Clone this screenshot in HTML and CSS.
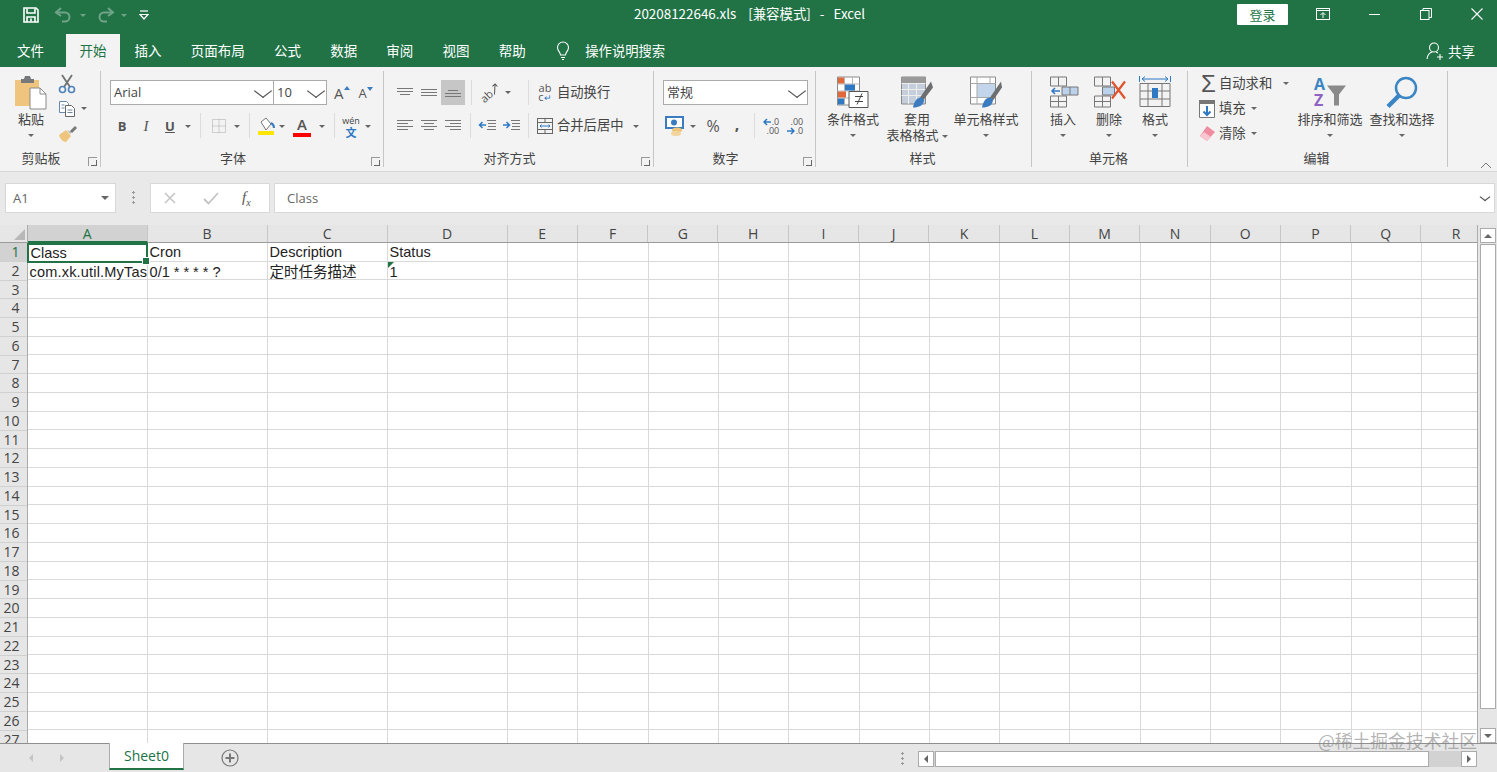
FILE: index.html
```html
<!DOCTYPE html>
<html lang="zh-CN">
<head>
    <meta charset="UTF-8">
    <title>20208122646.xls - Excel</title>
    <link rel="stylesheet" href="styles.css">
</head>
<body>

<!-- title bar -->
<header class="titlebar">
    <div class="qat">
        <svg class="qat-save" width="18" height="18" viewBox="0 0 18 18" fill="none" stroke="#fff" stroke-width="1.6"><path d="M2 2h12l2 2v12H2z"/><path d="M5 2.500v4.500h8V2.500M5 16v-5h8v5M9 12.500v3"/></svg>
        <svg class="qat-undo" width="20" height="16" viewBox="0 0 20 16" fill="none" stroke="#6fa488" stroke-width="2"><path d="M7 1 2 5.500 7 9"/><path d="M3 5.500h8a4.500 4.500 0 0 1 0 9H8"/></svg>
        <span class="caret caret-dim"></span>
        <svg class="qat-redo" width="20" height="16" viewBox="0 0 20 16" fill="none" stroke="#6fa488" stroke-width="2"><path d="M13 1l5 4.500L13 9"/><path d="M17 5.500H9a4.500 4.500 0 0 0 0 9h3"/></svg>
        <span class="caret caret-dim"></span>
        <svg class="qat-more" width="12" height="12" viewBox="0 0 12 12" fill="none" stroke="#fff" stroke-width="1.200"><path d="M2 2h8"/><path d="M2 5.500h8L6 10z" fill="none"/></svg>
    </div>
    <div class="doc-title">20208122646.xls&nbsp;&nbsp;&nbsp; [兼容模式]&nbsp;&nbsp; -&nbsp;&nbsp; Excel</div>
    <div class="window-btns">
        <button class="login">登录</button>
        <svg class="win-ico" width="16" height="14" viewBox="0 0 16 14" fill="none" stroke="#fff"><rect x="1.500" y="1.500" width="13" height="11"/><path d="M1.500 3.500h13M8 11V6M5.500 8 8 5.500 10.500 8"/></svg>
        <svg class="win-ico" width="14" height="14" viewBox="0 0 14 14" stroke="#fff"><path d="M1 7.500h11"/></svg>
        <svg class="win-ico" width="14" height="14" viewBox="0 0 14 14" fill="none" stroke="#fff"><rect x="1.500" y="3.500" width="8.500" height="9"/><path d="M4 3.500V1.500h8.500v9H10"/></svg>
        <svg class="win-ico" width="14" height="14" viewBox="0 0 14 14" fill="none" stroke="#fff" stroke-width="1.100"><path d="M1.500 1.500l11 11M12.500 1.500l-11 11"/></svg>
    </div>
</header>

<!-- ribbon tabs -->
<nav class="tabs">
    <span class="tab tab-file">文件</span>
    <span class="tab tab-active">开始</span>
    <span class="tab">插入</span>
    <span class="tab">页面布局</span>
    <span class="tab">公式</span>
    <span class="tab">数据</span>
    <span class="tab">审阅</span>
    <span class="tab">视图</span>
    <span class="tab">帮助</span>
    <svg class="bulb" width="16" height="20" viewBox="0 0 16 20" fill="none" stroke="#fff" stroke-width="1.100"><path d="M5.500 14c0-3-3-4-3-7.500a5.500 5.500 0 0 1 11 0c0 3.500-3 4.500-3 7.500z"/><path d="M6 16.500h4M7 18.500h2"/></svg>
    <span class="tell-me">操作说明搜索</span>
    <span class="share">
        <svg width="20" height="20" viewBox="0 0 20 20" fill="none" stroke="#fff" stroke-width="1.100"><circle cx="9" cy="6.500" r="4.500"/><path d="M2 18c.5-4 3-6.500 5.500-7.200M11 11l2 1M12 16h6M15 13v6"/></svg>
        共享
    </span>
</nav>

<!-- ribbon -->
<section class="ribbon">

    <div class="group group-clip">
        <div class="group-body">
            <div class="big big-paste">
                <svg width="34" height="35" viewBox="0 0 34 35"><path d="M1 5h24v26H1z" fill="#efc57d"/><path d="M7 4h3l1-3h5l1 3h3v4H7z" fill="#77787a"/><path d="M16 13h10l6 6v15H16z" fill="#fff" stroke="#8a8a8a"/><path d="M26 13v6h6" fill="none" stroke="#8a8a8a"/></svg>
                <span class="big-text">粘贴</span>
                <span class="caret"></span>
            </div>
            <div class="mini-col">
                <div class="mini"><svg width="18" height="20" viewBox="0 0 18 20" fill="none"><path d="M4 1l8 12M14 1 6 13" stroke="#6f7072" stroke-width="1.800"/><circle cx="4.500" cy="15.500" r="3" stroke="#4d82b8" stroke-width="1.600"/><circle cx="13.500" cy="15.500" r="3" stroke="#4d82b8" stroke-width="1.600"/></svg></div>
                <div class="mini"><svg width="18" height="18" viewBox="0 0 18 18" fill="#fff" stroke="#6a87a8"><path d="M1.500 1.500h7l2 2v9h-9z"/><path d="M7.500 5.500h6l3 3v8h-9z" stroke="#666"/><path d="M3.500 5h3M3.500 8h3M9.500 10h5M9.500 12.500h5" fill="none"/></svg><span class="caret caret-side"></span></div>
                <div class="mini"><svg width="20" height="18" viewBox="0 0 20 18"><path d="M1 10l7-5 5 6-5 6c-3 0-6-3-7-7z" fill="#efc57d"/><path d="M9 5l3 4 2-2z" fill="#bbb"/><path d="M13 7l5-5" stroke="#77787a" stroke-width="3"/></svg></div>
            </div>
        </div>
        <div class="group-label label-launch">剪贴板<span class="launcher"></span></div>
    </div>

    <div class="group group-font">
        <div class="group-body pad-rows">
            <div class="row-top">
                <div class="select select-font">Arial<span class="chev"></span></div>
                <div class="select select-size">10<span class="chev"></span></div>
                <span class="grow-a">A<svg width="6" height="4" viewBox="0 0 6 4"><path d="M0 4l3-4 3 4z" fill="#3b7cc0"/></svg></span>
                <span class="shrink-a">A<svg width="6" height="4" viewBox="0 0 6 4"><path d="M0 0l3 4 3-4z" fill="#3b7cc0"/></svg></span>
            </div>
            <div class="row-bottom">
                <span class="tb tb-b">B</span>
                <span class="tb tb-i">I</span>
                <span class="tb tb-u">U</span><span class="caret-box"><span class="caret"></span></span>
                <span class="sep"></span>
                <span class="tb"><svg width="16" height="16" viewBox="0 0 16 16" fill="none" stroke="#a9a9a9" stroke-dasharray="1 1"><path d="M1.500 1.500h13v13h-13zM8 1.500v13M1.500 8h13"/></svg></span><span class="caret-box"><span class="caret"></span></span>
                <span class="sep"></span>
                <span class="tb tb-fill"><svg width="20" height="18" viewBox="0 0 20 18"><path d="M5 5l5-4 5 6-5 6z" fill="#fff" stroke="#777"/><path d="M15 6c2 1 3 3 3 5" fill="none" stroke="#3b7cc0" stroke-width="2"/><path d="M2 14h16v4H2z" fill="#ffe600"/></svg></span><span class="caret-box"><span class="caret"></span></span>
                <span class="tb tb-color">A</span><span class="caret-box"><span class="caret"></span></span>
                <span class="sep"></span>
                <span class="tb tb-wen"><small>wén</small><b>文</b></span><span class="caret-box caret-wen"><span class="caret"></span></span>
            </div>
        </div>
        <div class="group-label label-launch">字体<span class="launcher"></span></div>
    </div>

    <div class="group group-align">
        <div class="group-body pad-rows">
            <div class="row-top">
                <span class="tb"><svg width="16" height="12" viewBox="0 0 16 12" stroke="#777"><path d="M0 1.500h16M0 4.500h16M3 7.500h10"/></svg></span>
                <span class="tb"><svg width="16" height="12" viewBox="0 0 16 12" stroke="#777"><path d="M0 2.500h16M0 5.500h16M0 8.500h16"/></svg></span>
                <span class="tb tb-on"><svg width="16" height="12" viewBox="0 0 16 12" stroke="#777"><path d="M3 3.500h10M0 6.500h16M0 9.500h16"/></svg></span>
                <span class="sep"></span>
                <span class="tb tb-orient">ab<svg width="10" height="12" viewBox="0 0 10 12" fill="none" stroke="#555"><path d="M1 10l7-7M5 2.500h3.500V6"/></svg></span><span class="caret-box"><span class="caret"></span></span>
                <span class="sep sep-far"></span>
                <span class="tb tb-wrap"><span>ab</span><span>c<i>↵</i></span></span>
                <span class="cmd-text">自动换行</span>
            </div>
            <div class="row-bottom">
                <span class="tb"><svg width="16" height="12" viewBox="0 0 16 12" stroke="#777"><path d="M0 .500h16M0 3.500h11M0 6.500h16M0 9.500h11"/></svg></span>
                <span class="tb"><svg width="16" height="12" viewBox="0 0 16 12" stroke="#777"><path d="M0 .500h16M3 3.500h10M0 6.500h16M3 9.500h10"/></svg></span>
                <span class="tb"><svg width="16" height="12" viewBox="0 0 16 12" stroke="#777"><path d="M0 .500h16M5 3.500h11M0 6.500h16M5 9.500h11"/></svg></span>
                <span class="sep sep-near"></span>
                <span class="tb"><svg width="18" height="12" viewBox="0 0 18 12" fill="none"><path d="M9 .500h9M10 3.500h8M10 6.500h8M9 9.500h9" stroke="#777"/><path d="M8 5H2M4.500 2 1.500 5l3 3" stroke="#2f79c2" stroke-width="1.500"/></svg></span>
                <span class="tb"><svg width="18" height="12" viewBox="0 0 18 12" fill="none"><path d="M9 .500h9M10 3.500h8M10 6.500h8M9 9.500h9" stroke="#777"/><path d="M1 5h6M4.500 2l3 3-3 3" stroke="#2f79c2" stroke-width="1.500"/></svg></span>
                <span class="sep sep-near"></span>
                <span class="tb"><svg width="18" height="18" viewBox="0 0 18 18" fill="none" stroke="#666"><rect x="1.500" y="1.500" width="15" height="15"/><path d="M1.500 5.500h15M1.500 12.500h15M9 1.500v4M9 12.500v4"/><path d="M4 9h10M5.500 7.500 4 9l1.500 1.500M12.500 7.500 14 9l-1.500 1.500" stroke="#2f79c2"/></svg></span>
                <span class="cmd-text">合并后居中</span><span class="caret-box caret-merge"><span class="caret"></span></span>
            </div>
        </div>
        <div class="group-label label-launch">对齐方式<span class="launcher"></span></div>
    </div>

    <div class="group group-number">
        <div class="group-body pad-rows">
            <div class="row-top">
                <div class="select select-format">常规<span class="chev"></span></div>
            </div>
            <div class="row-bottom">
                <span class="tb"><svg width="20" height="20" viewBox="0 0 20 20"><rect x="1" y="1" width="17" height="11" fill="#fff" stroke="#3b7cc0" stroke-width="2"/><circle cx="9" cy="6.500" r="3" fill="#3b7cc0"/><ellipse cx="12" cy="14" rx="5" ry="2.500" fill="#efc57d"/><ellipse cx="11" cy="17.500" rx="5" ry="2.500" fill="#f2d49c"/></svg></span><span class="caret-box"><span class="caret"></span></span>
                <span class="tb tb-pct">%</span>
                <span class="tb tb-comma">,</span>
                <span class="sep sep-near"></span>
                <span class="tb tb-dec"><svg width="8" height="8" viewBox="0 0 8 8" fill="none" stroke="#2f79c2" stroke-width="1.500"><path d="M8 4H1M4 1 1 4l3 3"/></svg><span class="dec-top">.0</span><span class="dec-bot">.00</span></span>
                <span class="tb tb-dec"><span class="dec-full">.00</span><svg width="8" height="8" viewBox="0 0 8 8" fill="none" stroke="#2f79c2" stroke-width="1.500"><path d="M0 4h7M4 1l3 3-3 3"/></svg><span class="dec-last">.0</span></span>
            </div>
        </div>
        <div class="group-label label-launch">数字<span class="launcher"></span></div>
    </div>

    <div class="group group-styles">
        <div class="group-body">
            <div class="big">
                <svg width="34" height="34" viewBox="0 0 34 34"><path d="M1.500 1.500h22v28h-22z" fill="#fff" stroke="#8a8a8a"/><path d="M1.500 8.500h22M1.500 15.500h22M1.500 22.500h22M8.500 1.500v28M16.500 1.500v28" stroke="#b5b5b5" fill="none"/><path d="M2 2h6v6H2zM2 16h8v6H2z" fill="#e0693c"/><path d="M9 9h10v6H9zM2 23h6v6H2z" fill="#2f79c2"/><path d="M13 16h19v16H13z" fill="#fff" stroke="#555"/><path d="M19 21h8M19 26h8M26 18l-5 11" stroke="#444" fill="none"/></svg>
                <span class="big-text">条件格式</span>
                <span class="caret"></span>
            </div>
            <div class="big">
                <svg width="34" height="34" viewBox="0 0 34 34"><path d="M1.500 1.500h24v27h-24z" fill="#c5cedb" stroke="#8a8a8a"/><path d="M1.500 8h24M1.500 14h24M1.500 20h24M8.500 1.500v27M16.500 1.500v27" stroke="#eee" fill="none"/><path d="M1.500 1.500h24v6h-24z" fill="#9a9a9a"/><path d="M31 6 20 22l3 3L33 12z" fill="#6d6e70"/><path d="M21 22c-4 0-7 4-8 10 6 0 11-2 11-8z" fill="#3b7cc0"/></svg>
                <span class="big-text">套用</span>
                <span class="big-text">表格格式<span class="caret caret-inline"></span></span>
            </div>
            <div class="big big-wide">
                <svg width="34" height="34" viewBox="0 0 34 34"><path d="M1.500 1.500h25v27h-25z" fill="#fff" stroke="#8a8a8a"/><path d="M8 8h18v14H8z" fill="#c3d5ea"/><path d="M1.500 8h25M1.500 22h25M8 1.500v27M21 1.500v6" stroke="#a9a9a9" fill="none"/><path d="M32 6 21 22l3 3L33 12z" fill="#6d6e70"/><path d="M21 22c-4 0-7 4-8 10 6 0 11-2 11-8z" fill="#3b7cc0"/></svg>
                <span class="big-text">单元格样式</span>
                <span class="caret"></span>
            </div>
        </div>
        <div class="group-label">样式</div>
    </div>

    <div class="group group-cells">
        <div class="group-body">
            <div class="big big-cell">
                <svg width="34" height="34" viewBox="0 0 34 34" fill="none" stroke="#777"><path d="M4.500 1.500h16v9h-16zM12.500 1.500v9M4.500 20.500h16v11h-16zM12.500 20.500v11M4.500 26h16"/><path d="M16 11.500h16v8H16zM24 11.500v8" fill="#bcd2ea"/><path d="M14 15.500H6M9 12.500l-3 3 3 3" stroke="#2f79c2" stroke-width="1.500"/></svg>
                <span class="big-text">插入</span>
                <span class="caret"></span>
            </div>
            <div class="big big-cell">
                <svg width="34" height="34" viewBox="0 0 34 34" fill="none" stroke="#777"><path d="M2.500 1.500h16v9h-16zM10.500 1.500v9M2.500 20.500h16v11h-16zM10.500 20.500v11M2.500 26h16"/><path d="M10.500 11.500h12v8h-12z" fill="#bcd2ea"/><path d="M20 6l13 17M33 6 20 23" stroke="#e0532c" stroke-width="2.200"/></svg>
                <span class="big-text">删除</span>
                <span class="caret"></span>
            </div>
            <div class="big big-cell">
                <svg width="34" height="35" viewBox="0 0 34 35" fill="none" stroke="#777"><path d="M1.500 1v6M32.500 1v6" stroke="#2f79c2"/><path d="M4 4h26M7 1.500 4 4l3 2.500M27 1.500 30 4l-3 2.500" stroke="#2f79c2"/><path d="M2 8.500h30v23H2zM10 8.500v23M24 8.500v23M2 16h30M2 24h30"/><path d="M14 13h6v10h-6z" fill="#2f79c2" stroke="none"/></svg>
                <span class="big-text">格式</span>
                <span class="caret"></span>
            </div>
        </div>
        <div class="group-label">单元格</div>
    </div>

    <div class="group group-edit">
        <div class="group-body">
            <div class="mini-col mini-edit">
                <div class="mini"><span class="sigma">Σ</span><span class="cmd-text">自动求和</span><span class="caret caret-far"></span></div>
                <div class="mini"><svg class="mini-ico" width="18" height="20" viewBox="0 0 18 20" fill="none"><path d="M1.500 1.500h15v17h-15z" fill="#fff" stroke="#777"/><path d="M1 1h16v4H1z" fill="#777"/><path d="M9 7v9M5.500 12.500 9 16l3.500-3.500" stroke="#2f79c2" stroke-width="2"/></svg><span class="cmd-text">填充</span><span class="caret caret-side"></span></div>
                <div class="mini"><svg class="mini-ico" width="18" height="18" viewBox="0 0 18 18"><path d="M9 1l8 6-8 9-7-5z" fill="#f08ba0"/><path d="M2 11l4-4 7 5-4 4z" fill="#f9c6d0"/></svg><span class="cmd-text">清除</span><span class="caret caret-side"></span></div>
            </div>
            <div class="big big-find">
                <svg width="36" height="34" viewBox="0 0 36 34"><text x="2" y="14" class="az az-a">A</text><text x="2" y="30" class="az az-z">Z</text><path d="M15 10h19l-7 9v11h-5V19z" fill="#8a8a8a"/></svg>
                <span class="big-text">排序和筛选</span>
                <span class="caret"></span>
            </div>
            <div class="big big-find">
                <svg width="36" height="34" viewBox="0 0 36 34" fill="none"><circle cx="22" cy="12.500" r="10" stroke="#3b85c4" stroke-width="2.500"/><path d="M15 20 4 31" stroke="#3b85c4" stroke-width="4.500"/></svg>
                <span class="big-text">查找和选择</span>
                <span class="caret"></span>
            </div>
        </div>
        <div class="group-label">编辑</div>
    </div>

    <svg class="collapse" width="12" height="7" viewBox="0 0 12 7" fill="none" stroke="#777"><path d="M1 6l5-5 5 5"/></svg>
</section>

<!-- formula bar -->
<section class="formula">
    <div class="name-box">A1<span class="caret caret-name"></span></div>
    <span class="grip"></span>
    <div class="fx-box">
        <svg width="14" height="14" viewBox="0 0 14 14" stroke="#c4c4c4" stroke-width="1.500"><path d="M2 2l10 10M12 2 2 12"/></svg>
        <svg class="fx-check" width="16" height="14" viewBox="0 0 16 14" fill="none" stroke="#c4c4c4" stroke-width="1.800"><path d="M1 8l4.500 4.500L15 2"/></svg>
        <span class="fx">f<sub>x</sub></span>
    </div>
    <div class="formula-input">Class<span class="chev chev-small"></span></div>
</section>

<!-- worksheet -->
<section class="sheet">
    <div class="sheet-main">
        <div class="col-heads">
            <div class="corner"><span class="corner-mark"></span></div>
            <div class="col col-wide col-on">A</div>
            <div class="col col-wide">B</div>
            <div class="col col-wide">C</div>
            <div class="col col-wide">D</div>
            <div class="col">E</div>
            <div class="col">F</div>
            <div class="col">G</div>
            <div class="col">H</div>
            <div class="col">I</div>
            <div class="col">J</div>
            <div class="col">K</div>
            <div class="col">L</div>
            <div class="col">M</div>
            <div class="col">N</div>
            <div class="col">O</div>
            <div class="col">P</div>
            <div class="col">Q</div>
            <div class="col">R</div>
        </div>
        <div class="sheet-body">
            <div class="row-heads">
                <div class="row-num row-on">1</div><div class="row-num">2</div><div class="row-num">3</div>
                <div class="row-num">4</div><div class="row-num">5</div><div class="row-num">6</div>
                <div class="row-num">7</div><div class="row-num">8</div><div class="row-num">9</div>
                <div class="row-num">10</div><div class="row-num">11</div><div class="row-num">12</div>
                <div class="row-num">13</div><div class="row-num">14</div><div class="row-num">15</div>
                <div class="row-num">16</div><div class="row-num">17</div><div class="row-num">18</div>
                <div class="row-num">19</div><div class="row-num">20</div><div class="row-num">21</div>
                <div class="row-num">22</div><div class="row-num">23</div><div class="row-num">24</div>
                <div class="row-num">25</div><div class="row-num">26</div><div class="row-num">27</div>
            </div>
            <div class="cells">
                <div class="data-row">
                    <div class="cell cell-selected">Class<span class="fill-handle"></span></div>
                    <div class="cell">Cron</div>
                    <div class="cell">Description</div>
                    <div class="cell">Status</div>
                </div>
                <div class="data-row">
                    <div class="cell cell-long">com.xk.util.MyTask</div>
                    <div class="cell">0/1 * * * * ?</div>
                    <div class="cell">定时任务描述</div>
                    <div class="cell cell-flag">1</div>
                </div>
            </div>
        </div>
    </div>
    <div class="vscroll">
        <span class="sb-btn"><span class="tri tri-up"></span></span>
        <span class="sb-thumb"></span>
        <span class="sb-rest"></span>
        <span class="sb-btn"><span class="tri tri-down"></span></span>
    </div>
</section>

<!-- sheet tabs and status -->
<footer class="bottom">
    <span class="nav-arrows"><span class="tri tri-left tri-dim"></span><span class="tri tri-right tri-dim"></span></span>
    <span class="sheet-tab">Sheet0</span>
    <svg class="add-sheet" width="18" height="18" viewBox="0 0 18 18" fill="none" stroke="#777"><circle cx="9" cy="9" r="8" stroke-width="1.200"/><path d="M9 4.500v9M4.500 9h9" stroke-width="2"/></svg>
    <span class="grip grip-bottom"></span>
    <div class="hscroll">
        <span class="sb-btn"><span class="tri tri-left"></span></span>
        <span class="sb-thumb-h"></span>
        <span class="sb-btn"><span class="tri tri-right"></span></span>
    </div>
</footer>

<div class="watermark">@稀土掘金技术社区</div>

</body>
</html>
```

FILE: styles.css
```css
* {
    box-sizing: border-box;
}
html, body {
    margin: 0;
    height: 772px;
    overflow: hidden;
}
body {
    position: relative;
    display: flex;
    flex-direction: column;
    font-family: "Noto Sans CJK SC", "Noto Sans", sans-serif;
    font-size: 13px;
    color: #444;
    background-color: #e6e6e6;
}

/* title bar */
.titlebar {
    height: 34px;
    flex: none;
    display: flex;
    align-items: center;
    background-color: #217346;
    color: #fff;
}
.qat {
    width: 634px;
    display: flex;
    align-items: center;
    padding-left: 22px;
    margin-top: -4px;
}
.qat-undo {
    margin-left: 14px;
}
.qat-redo {
    margin-left: 9px;
}
.qat-more {
    margin-left: 11px;
}
.doc-title {
    width: 603px;
    font-size: 13.400px;
    line-height: 26px;
    margin-top: -8px;
}
.window-btns {
    flex: 1;
    display: flex;
    align-items: center;
    margin-top: -6px;
}
.login {
    width: 51px;
    height: 21px;
    border: none;
    border-radius: 1px;
    padding: 0;
    background-color: #fff;
    color: #217346;
    font: 13px "Noto Sans CJK SC", sans-serif;
}
.win-ico {
    margin-left: 27px;
}
.window-btns .win-ico:nth-child(3),
.window-btns .win-ico:nth-child(4),
.window-btns .win-ico:nth-child(5) {
    margin-left: 37px;
}

/* tabs */
.tabs {
    height: 33px;
    flex: none;
    display: flex;
    align-items: center;
    background-color: #217346;
    color: #fff;
    font-size: 13.500px;
}
.tab {
    height: 33px;
    line-height: 32px;
    padding: 0 14.600px;
}
.tab-file {
    padding: 0 0 0 17px;
    margin-right: 22px;
}
.tab-active {
    padding: 0 13.500px;
    background-color: #f3f3f3;
    color: #217346;
}
.bulb {
    margin-left: 15px;
}
.tell-me {
    margin-left: 14px;
    font-size: 13.300px;
}
.share {
    margin-left: auto;
    margin-right: 22px;
    display: flex;
    align-items: center;
    gap: 3px;
}

/* ribbon */
.ribbon {
    height: 105px;
    flex: none;
    position: relative;
    display: flex;
    padding: 4px 0;
    background-color: #f3f3f3;
    border-bottom: 1px solid #d6d6d6;
}
.group {
    position: relative;
    display: flex;
    flex-direction: column;
    border-right: 1px solid #c6c6c6;
}
.group-clip { width: 101px; }
.group-font { width: 283px; }
.group-align { width: 270px; }
.group-number { width: 162px; }
.group-styles { width: 216px; }
.group-cells { width: 156px; }
.group-edit { width: 260px; }
.group-body {
    flex: 1;
    display: flex;
}
.pad-rows {
    flex-direction: column;
    padding: 9px 0 0 9px;
}
.group-styles .group-body { padding-left: 5px; }
.group-cells .group-body { padding-left: 8px; }
.group-edit .group-body { padding-left: 10px; }
.group-label {
    height: 17px;
    line-height: 17px;
    margin-bottom: 1px;
    text-align: center;
    font-size: 13px;
    padding-right: 2px;
}
.label-launch {
    padding-right: 18px;
}
.launcher {
    position: absolute;
    right: 3px;
    bottom: 1px;
    width: 9px;
    height: 9px;
    border: 1px solid #999;
    border-width: 1px 0 0 1px;
}
.launcher::after {
    content: "";
    position: absolute;
    right: 0;
    bottom: 0;
    width: 5px;
    height: 5px;
    border-right: 1px solid #666;
    border-bottom: 1px solid #666;
}

/* big buttons */
.big {
    width: 64px;
    margin-top: 4px;
    display: flex;
    flex-direction: column;
    align-items: center;
}
.big svg {
    height: 35px;
    flex: none;
    margin-bottom: 1px;
}
.big-text {
    height: 16px;
    line-height: 16px;
    font-size: 13px;
    white-space: nowrap;
}
.big .caret {
    margin-top: 7px;
}
.big-paste {
    width: 50px;
    margin-left: 6px;
    margin-right: 2px;
}
.big-wide { width: 74px; }
.big-cell { width: 46px; }
.big-find { width: 72px; }
.big .caret-inline {
    margin: 0 0 2px 3px;
}

/* small commands */
.mini-col {
    display: flex;
    flex-direction: column;
}
.mini {
    height: 25px;
    display: flex;
    align-items: center;
}
.mini-edit {
    width: 96px;
}
.mini-ico {
    margin-right: 3px;
}
.sigma {
    width: 21px;
    font: 24px "Liberation Sans", sans-serif;
    color: #555;
    text-align: center;
}
.cmd-text {
    font-size: 13.300px;
    white-space: nowrap;
    line-height: 16px;
    padding-bottom: 2px;
    align-self: center;
}

/* carets */
.caret {
    display: inline-block;
    width: 0;
    height: 0;
    border-left: 3px solid transparent;
    border-right: 3px solid transparent;
    border-top: 3px solid #666;
}
.caret-dim {
    margin-left: 6px;
    border-top-color: #6fa488;
}
.caret-side {
    margin-left: 5px;
}
.caret-far {
    margin-left: 11px;
}
.caret-box {
    width: 12px;
    display: flex;
    align-items: center;
    justify-content: center;
}
.caret-merge {
    margin-left: 7px;
}
.caret-wen {
    margin-left: -1px;
}

/* toolbar rows */
.row-top {
    height: 25px;
    display: flex;
    align-items: center;
}
.row-bottom {
    height: 26px;
    margin-top: 8px;
    display: flex;
    align-items: stretch;
}
.tb {
    width: 24px;
    display: flex;
    align-items: center;
    justify-content: center;
    flex: none;
}
.row-top .tb {
    height: 25px;
}
.tb-on {
    background-color: #c6c6c6;
}
.tb-fill {
    width: 20px;
}
.sep {
    width: 1px;
    height: 25px;
    margin: 0 6px;
    background-color: #dcdcdc;
}
.sep-near {
    margin: 0 4px 0 5px;
}
.sep-far {
    margin: 0 4px 0 14px;
}
.select {
    height: 25px;
    position: relative;
    display: flex;
    align-items: center;
    padding: 0 0 2px 3px;
    background-color: #fff;
    border: 1px solid #ababab;
    font-size: 13px;
}
.select-font {
    width: 164px;
    font-family: "Open Sans", sans-serif;
}
.select-size {
    width: 54px;
    margin-left: -1px;
    font-family: "Open Sans", sans-serif;
}
.select-format {
    width: 145px;
}
.chev {
    position: absolute;
    right: 5px;
    top: 5px;
    width: 10px;
    height: 10px;
    border-right: 1px solid #555;
    border-bottom: 1px solid #555;
    transform: scaleX(1.300) rotate(45deg);
}
.grow-a, .shrink-a {
    display: flex;
    font-family: "Open Sans", sans-serif;
    color: #555;
}
.grow-a {
    margin-left: 7px;
    font-size: 15px;
}
.shrink-a {
    margin-left: 9px;
    font-size: 13px;
}
.grow-a svg, .shrink-a svg {
    margin-top: 3px;
}
.tb-b, .tb-i, .tb-u {
    font: bold 13px "Open Sans", sans-serif;
    color: #555;
}
.tb-i {
    font-style: italic;
    font-weight: 400;
    font-family: "Liberation Serif", serif;
    font-size: 15px;
}
.tb-u {
    text-decoration: underline;
}
.tb-color {
    font: 600 15px "Open Sans", sans-serif;
    color: #555;
    border-bottom: 4px solid #f00;
    margin: 0 5px 2px;
    width: 18px;
    line-height: 1;
    padding-top: 2px;
}
.tb-wen {
    flex-direction: column;
    line-height: 1;
    margin-left: -2px;
}
.tb-wen small {
    font: 9px "Open Sans", sans-serif;
}
.tb-wen b {
    font-size: 11px;
    line-height: 11px;
    color: #2f79c2;
}
.tb-orient {
    font: 11px "Open Sans", sans-serif;
    color: #555;
    transform: rotate(-42deg);
}
.tb-wrap {
    flex-direction: column;
    font: 11px "Open Sans", sans-serif;
    line-height: 9px;
    color: #555;
}
.tb-wrap i {
    font-style: normal;
    color: #2f79c2;
    font-size: 9px;
}
.tb-pct {
    margin-left: 2px;
    font: 16px "Open Sans", sans-serif;
    color: #555;
}
.tb-comma {
    font: bold 16px "Open Sans", sans-serif;
    color: #555;
    padding-bottom: 5px;
}
.tb-dec {
    display: grid;
    grid-template-columns: 9px 1fr;
    grid-template-rows: 9px 9px;
    align-content: center;
    padding: 0 5px;
    font: 9px "Open Sans", sans-serif;
    line-height: 9px;
    color: #555;
}
.tb-dec svg {
    align-self: center;
}
.dec-top, .dec-last {
    justify-self: end;
}
.dec-bot, .dec-full {
    grid-column: 1 / 3;
    justify-self: end;
}
.az {
    font: bold 16px "Open Sans", sans-serif;
}
.az-a { fill: #3b85c4; }
.az-z { fill: #8f62c4; }
.collapse {
    position: absolute;
    right: 5px;
    bottom: 2px;
}

/* formula bar */
.formula {
    height: 53px;
    flex: none;
    display: flex;
    padding: 11px 2px 11px 5px;
    background-color: #e9e9e9;
}
.name-box, .fx-box, .formula-input {
    height: 30px;
    background-color: #fff;
    border: 1px solid #d8d8d8;
    display: flex;
    align-items: center;
    font-family: "Open Sans", sans-serif;
    color: #666;
}
.name-box {
    width: 111px;
    padding-left: 7px;
    position: relative;
}
.caret-name {
    position: absolute;
    right: 6px;
    top: 12px;
    border-left-width: 4px;
    border-right-width: 4px;
    border-top-width: 4px;
}
.grip {
    width: 34px;
    flex: none;
    height: 30px;
    background: radial-gradient(circle, #999 1px, transparent 1.300px) center 7px / 3px 5px repeat-y;
    background-clip: content-box;
    padding: 7px 0;
}
.fx-box {
    width: 120px;
    padding: 0 0 0 12px;
}
.fx-check {
    margin-left: 26px;
}
.fx {
    margin-left: 23px;
    font: italic 15px "Liberation Serif", serif;
    color: #555;
}
.fx sub {
    font-size: 10px;
}
.formula-input {
    flex: 1;
    margin-left: 4px;
    padding-left: 12px;
    position: relative;
}
.chev-small {
    width: 6px;
    height: 6px;
    top: 10px;
    right: 6px;
}

/* worksheet */
.sheet {
    flex: 1;
    min-height: 0;
    display: flex;
    overflow: hidden;
    background-color: #fff;
    height: 518px;
}
.sheet-main {
    width: 1478px;
    flex: none;
    display: flex;
    flex-direction: column;
    overflow: hidden;
    border-right: 1px solid #ababab;
}
.col-heads {
    height: 18px;
    flex: none;
    display: flex;
    background-color: #e6e6e6;
    border-bottom: 1px solid #9a9a9a;
}
.corner {
    width: 27.600px;
    flex: none;
    position: relative;
    border-right: 1px solid #ababab;
}
.corner-mark {
    position: absolute;
    right: 2px;
    bottom: 2px;
    border-style: solid;
    border-width: 0 0 11px 11px;
    border-color: transparent transparent #b8b8b8 transparent;
}
.col {
    width: 70.300px;
    flex: none;
    text-align: center;
    font: 14px/17px "Open Sans", sans-serif;
    color: #444;
    border-right: 1px solid #c6c6c6;
}
.col-wide {
    width: 120px;
}
.col-on {
    background-color: #d2d2d2;
    color: #217346;
    border-bottom: 2px solid #217346;
    height: 18px;
}
.sheet-body {
    flex: 1;
    min-height: 0;
    display: flex;
    overflow: hidden;
}
.row-heads {
    width: 27.600px;
    flex: none;
    background-color: #e6e6e6;
    border-right: 1px solid #ababab;
}
.row-num {
    height: 18.750px;
    padding-right: 7px;
    text-align: right;
    font: 14px/18px "Open Sans", sans-serif;
    color: #444;
    border-bottom: 1px solid #d0d0d0;
}
.row-on {
    background-color: #d2d2d2;
    color: #217346;
}
.cells {
    flex: 1;
    background-image:
        repeating-linear-gradient(to right, transparent 0 119px, #d9d9d9 119px 120px),
        repeating-linear-gradient(to right, transparent 0 69.300px, #d9d9d9 69.300px 70.300px),
        repeating-linear-gradient(to bottom, transparent 0 17.750px, #d9d9d9 17.750px 18.750px);
    background-size: 480px 100%, 100% 100%, 100% 100%;
    background-position: 0 0, 480px 0, 0 0;
    background-repeat: no-repeat;
}
.data-row {
    height: 18.750px;
    display: flex;
}
.cell {
    width: 120px;
    flex: none;
    position: relative;
    padding-left: 2px;
    overflow: hidden;
    white-space: nowrap;
    font: 14.500px/20px "Liberation Sans", "Noto Sans CJK SC", sans-serif;
    color: #222;
}
.cell-long {
    width: 119px;
    margin-right: 1px;
    letter-spacing: 0.180px;
}
.cell-selected {
    overflow: visible;
    margin-left: -1px;
    padding-left: 2px;
    width: 121px;
    height: 19.500px;
    border: 2px solid #217346;
    line-height: 17px;
    background-color: #fff;
}
.data-row:first-child .cell-selected ~ .cell {
    line-height: 19px;
}
.fill-handle {
    position: absolute;
    right: -4px;
    bottom: -4px;
    width: 6px;
    height: 6px;
    background-color: #217346;
    border: 1px solid #fff;
    box-sizing: content-box;
}
.cell-flag::before {
    content: "";
    position: absolute;
    left: 0;
    top: 0;
    border-style: solid;
    border-width: 6px 6px 0 0;
    border-color: #217346 transparent transparent transparent;
}

/* scroll bars */
.vscroll {
    width: 19px;
    flex: none;
    display: flex;
    flex-direction: column;
    align-items: center;
    padding: 3px 0 0;
    background-color: #e6e6e6;
}
.sb-btn {
    width: 16px;
    height: 15px;
    flex: none;
    display: flex;
    align-items: center;
    justify-content: center;
    background-color: #fff;
    border: 1px solid #ababab;
}
.sb-thumb {
    width: 16px;
    height: 465px;
    flex: none;
    background-color: #fff;
    border: 1px solid #ababab;
    margin-top: 1px;
}
.sb-rest {
    flex: 1;
}
.tri {
    width: 0;
    height: 0;
    border-style: solid;
}
.tri-up {
    border-width: 0 4px 4px 4px;
    border-color: transparent transparent #666 transparent;
}
.tri-down {
    border-width: 4px 4px 0 4px;
    border-color: #666 transparent transparent transparent;
}
.tri-left {
    border-width: 4px 4px 4px 0;
    border-color: transparent #666 transparent transparent;
}
.tri-right {
    border-width: 4px 0 4px 4px;
    border-color: transparent transparent transparent #666;
}
.tri-dim.tri-left { border-right-color: #c4c4c4; }
.tri-dim.tri-right { border-left-color: #c4c4c4; }

/* bottom bar */
.bottom {
    height: 29px;
    flex: none;
    display: flex;
    align-items: flex-start;
    background-color: #e6e6e6;
    border-top: 1px solid #8f8f8f;
}
.nav-arrows {
    width: 109px;
    height: 28px;
    display: flex;
    align-items: center;
    gap: 27px;
    padding-left: 29px;
}
.sheet-tab {
    width: 75px;
    height: 27px;
    text-align: center;
    background-color: #fff;
    color: #217346;
    font: 14px/26px "Open Sans", sans-serif;
    border-left: 1px solid #ababab;
    border-right: 1px solid #ababab;
    border-bottom: 2px solid #217346;
    margin-top: -1px;
}
.add-sheet {
    margin: 5px 0 0 37px;
}
.grip-bottom {
    width: 16px;
    height: 20px;
    margin: 4px 0 0 655px;
    padding: 3px 0;
    background-position: center 3px;
}
.hscroll {
    margin: 7px 0 0 8px;
    width: 559px;
    height: 16px;
    display: flex;
    background-color: #d2d2d2;
}
.hscroll .sb-btn {
    height: 16px;
}
.hscroll .sb-btn:last-child {
    margin-left: auto;
}
.sb-thumb-h {
    width: 494px;
    margin-left: 1px;
    background-color: #fff;
    border: 1px solid #ababab;
}

/* watermark lies over the grid */
.watermark {
    position: absolute;
    right: 20px;
    top: 727px;
    font-size: 17.800px;
    line-height: 26px;
    color: rgba(130, 130, 130, 0.6);
    white-space: nowrap;
}
```
